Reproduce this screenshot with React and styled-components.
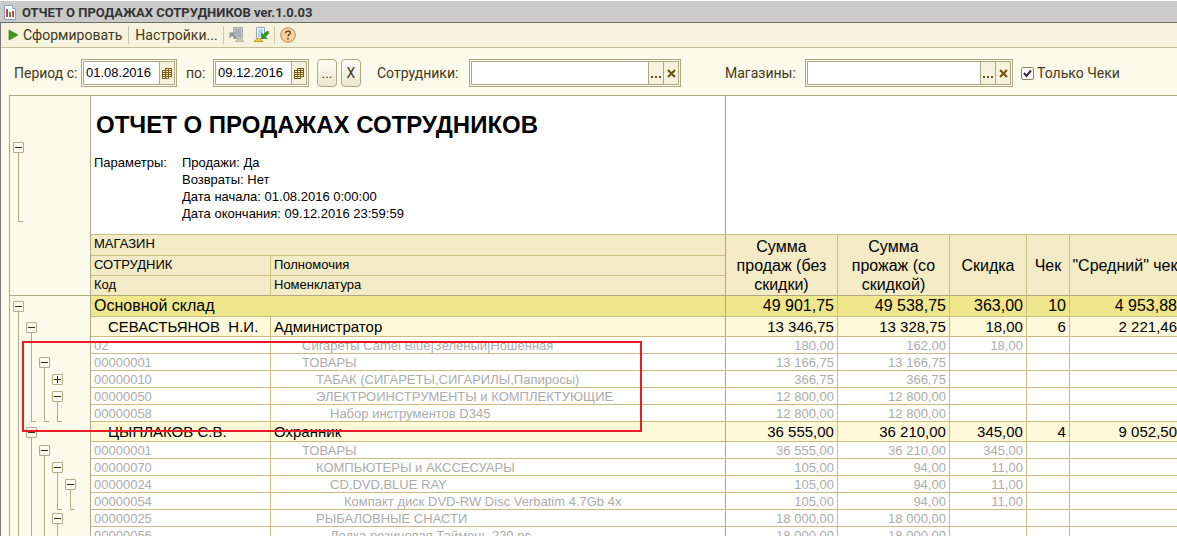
import React from "react";
import styled, { createGlobalStyle, css } from "styled-components";

const C = {
  line: "#c9be80",
  frame: "#b0a882",
  tree: "#b3ac88",
  bg: "#fcfaeb",
  bar: "#f5f2dd",
  head: "#f3ebc6",
  ink: "#42381a",
};

const Global = createGlobalStyle`
  * { box-sizing: border-box; }
  body { margin: 0; font-family: "Liberation Sans", Arial, sans-serif; background: ${C.bg}; overflow: hidden; }
  button, input { font-family: inherit; }
`;

const Window = styled.main`
  display: flex;
  flex-direction: column;
  height: 100vh;
  background: ${C.bg};
`;

const TitleBar = styled.header`
  display: flex;
  align-items: center;
  gap: 5px;
  height: 23px;
  flex: none;
  padding: 2px 3px 0;
  border-top: 1px solid #fff;
  border-bottom: 1px solid #6e6e6e;
  background: #cacaca;
`;

const WindowTitle = styled.h1`
  margin: 0;
  font-family: Roboto, sans-serif;
  font-size: 13px;
  font-weight: 700;
  line-height: 18px;
  color: #333;
  white-space: nowrap;
`;

const Body = styled.div`
  display: flex;
  flex-direction: column;
  flex: 1;
  min-height: 0;
  border-left: 1px solid #777;
`;

const Toolbar = styled.nav`
  display: flex;
  align-items: center;
  height: 25px;
  flex: none;
  padding-left: 7px;
  background: ${C.bar};
  border-bottom: 1px solid #c4bd98;
`;

const ToolButton = styled.button`
  display: flex;
  align-items: center;
  gap: 4px;
  height: 22px;
  margin: 0 0 0 ${(p) => p.$before ?? 0}px;
  padding: 0;
  border: 0;
  background: none;
  font-family: Roboto, sans-serif;
  font-size: 14px;
  color: ${C.ink};
  white-space: nowrap;
`;

const Divider = styled.span`
  width: 1px;
  height: 18px;
  margin: 0 ${(p) => p.$gap}px;
  background: #cdc7a5;
`;

const Filters = styled.form`
  display: flex;
  align-items: center;
  height: 47px;
  flex: none;
  padding: 3px 0 0 13px;
  font-family: Roboto, sans-serif;
  font-size: 14px;
  color: ${C.ink};
  white-space: nowrap;
`;

const FieldLabel = styled.label`
  width: ${(p) => p.$w}px;
  flex: none;
`;

const Field = styled.div`
  display: flex;
  width: ${(p) => p.$w}px;
  height: 28px;
  flex: none;
  margin-right: ${(p) => p.$after}px;
  padding: 1px;
  border: 1px solid ${C.frame};
  background: ${C.bg};
`;

const FieldInner = styled.div`
  display: flex;
  flex: 1;
  min-width: 0;
  border: 1px solid ${C.frame};
`;

const TextInput = styled.input`
  flex: 1;
  width: 0;
  min-width: 0;
  padding: 0 2px 2px;
  border: 0;
  outline: 0;
  background: #fff;
  font-family: "Liberation Sans", Arial, sans-serif;
  font-size: 13px;
  color: #000;
`;

const FieldButton = styled.button`
  display: flex;
  align-items: center;
  justify-content: center;
  width: 15px;
  flex: none;
  padding: 0;
  border: 0;
  border-left: 1px solid ${C.frame};
  background: ${C.bar};
`;

const PushButton = styled.button`
  width: 20px;
  height: 28px;
  flex: none;
  margin-right: ${(p) => p.$after}px;
  padding: 0;
  border: 1px solid ${C.frame};
  border-radius: 4px;
  background: linear-gradient(#fffef6, #ece7cd);
  font-family: Roboto, sans-serif;
  font-size: 14px;
  color: ${C.ink};
`;

const CheckLabel = styled.label`
  display: flex;
  align-items: center;
  gap: 3px;
`;

const CheckBox = styled.input`
  appearance: none;
  width: 13px;
  height: 13px;
  margin: 0;
  border: 1px solid #8f8763;
  border-radius: 2px;
  background: #fff
    url("data:image/svg+xml,%3Csvg xmlns='http://www.w3.org/2000/svg' viewBox='0 0 11 11'%3E%3Cpath d='M2 5l2.5 3L9 2.5' fill='none' stroke='%23333' stroke-width='2'/%3E%3C/svg%3E");
`;

const Report = styled.section`
  position: relative;
  flex: 1;
  min-height: 0;
  margin-left: 8px;
  overflow: hidden;
  border-left: 1px solid ${C.frame};
  border-top: 1px solid ${C.frame};
`;

const Sheet = styled.table`
  width: 100%;
  min-width: 1171px;
  table-layout: fixed;
  border-collapse: separate;
  border-spacing: 0;
  color: #000;
`;

const Col = styled.col`
  width: ${(p) => (p.$w ? `${p.$w}px` : "auto")};
`;

const TreeCell = styled.td`
  padding: 0 0 0 2px;
  border-right: 1px solid ${C.frame};
  ${(p) => p.$ruled && css`border-bottom: 1px solid ${C.frame};`}
  background: ${C.bg};
  vertical-align: top;
`;

const Slots = styled.div`
  display: flex;
  height: ${(p) => p.$h}px;
`;

const Slot = styled.span`
  display: flex;
  flex-direction: column;
  align-items: center;
  width: 13px;
  height: 100%;
  padding-top: ${(p) => p.$top ?? 0}px;
  padding-bottom: ${(p) => p.$bottom ?? 0}px;
`;

const Stem = styled.span`
  width: 5px;
  flex: 1;
  margin-left: 4px;
  border-left: 1px solid ${C.tree};
  ${(p) => p.$end && css`border-bottom: 1px solid ${C.tree};`}
`;

const Gap = styled.span`
  flex: 1;
`;

const Toggle = styled.button`
  position: relative;
  width: 11px;
  height: 11px;
  flex: none;
  padding: 0;
  border: 1px solid ${C.tree};
  border-radius: 1px;
  background: #fffef6;
  &::before {
    content: "";
    position: absolute;
    left: 1px;
    top: 4px;
    width: 7px;
    height: 1px;
    background: #3c3000;
  }
  ${(p) => p.$closed && css`
    &::after {
      content: "";
      position: absolute;
      left: 4px;
      top: 1px;
      width: 1px;
      height: 7px;
      background: #3c3000;
    }
  `}
`;

const rowLook = {
  store: css`background: #f0e68c; font-size: 16px; color: #000; line-height: 20px;`,
  person: css`background: #fff9da; font-size: 15px; color: #000; line-height: 19px;`,
  item: css`padding-top: 1px; background: #fff; font-size: 13px; color: #acacac; line-height: 15px;`,
};

const Cell = styled.td`
  padding: 0 3px 0 ${(p) => 3 + (p.$indent ?? 0) * 14}px;
  border-right: 1px solid ${(p) => (p.$split ? C.frame : C.line)};
  border-bottom: 1px solid ${C.line};
  text-align: ${(p) => (p.$num ? "right" : "left")};
  white-space: pre;
  overflow: hidden;
  ${(p) => rowLook[p.$kind]}
`;

const HeadCell = styled.th`
  height: ${(p) => p.$h}px;
  padding: 0 3px 2px;
  border-right: 1px solid ${(p) => (p.$split ? C.frame : C.line)};
  border-bottom: 1px solid ${(p) => (p.$last ? C.frame : C.line)};
  background: ${C.head};
  font-size: 13px;
  font-weight: 400;
  line-height: 16px;
  text-align: left;
  ${(p) => p.$big && css`
    padding: 1px 0 0;
    font-size: 16px;
    line-height: 19px;
    text-align: center;
    white-space: pre-line;
  `}
`;

const Cover = styled.td`
  height: 139px;
  padding: 14px 3px 0;
  border-bottom: 1px solid ${C.line};
  ${(p) => p.$split && css`border-right: 1px solid ${C.frame};`}
  background: #fff;
  vertical-align: top;
`;

const ReportTitle = styled.h2`
  margin: 0 0 15px;
  padding-left: 2px;
  font-size: 24px;
  line-height: 29px;
`;

const Params = styled.dl`
  display: grid;
  grid-template-columns: 88px 1fr;
  margin: 0;
  font-size: 13px;
  line-height: 17px;
`;

const Param = styled.dd`
  grid-column: 2;
  margin: 0;
`;

const Highlight = styled.div`
  position: absolute;
  left: 12px;
  top: 245px;
  width: 620px;
  height: 91px;
  border: 2px solid #ed1c24;
  pointer-events: none;
`;

const ReportIcon = () => (
  <svg width="14" height="15" viewBox="0 0 14 15">
    <path d="M1.5.5h8l3 3v11h-11z" fill="#fff" stroke="#8fa3ba" />
    <path d="M9.500.5v3h3" fill="#dbe6f2" stroke="#8fa3ba" />
    <path d="M3 4h2v8H3z" fill="#d63a3a" />
    <path d="M6 7h2v5H6z" fill="#3a9a3a" />
    <path d="M9 6h2v6H9z" fill="#d63a3a" />
  </svg>
);

const PlayIcon = () => (
  <svg width="11" height="12" viewBox="0 0 11 12">
    <path d="M1 1l9 5-9 5z" fill="#3a9a22" stroke="#2a7a1a" strokeWidth=".6" />
  </svg>
);

const RestoreIcon = () => (
  <svg width="16" height="16" viewBox="0 0 16 16">
    <path d="M4.500.5h9v11h-9z" fill="#c3c8cc" stroke="#a6abb0" />
    <path d="M6 3h6M6 5h6M6 7h6M8 9h4" stroke="#8f969b" />
    <path d="M6 14.500l4.500-4 4.500 4z" fill="#cfc9b4" stroke="#b3ac94" strokeWidth=".7" />
    <path d="M.5 5.500h6L4.800 7.200l3 3-1.600 1.600-3-3L.5 11.500z" fill="#8b979c" />
  </svg>
);

const SaveIcon = () => (
  <svg width="16" height="16" viewBox="0 0 16 16">
    <path d="M3.500.5h8v11h-8z" fill="#fff" stroke="#8fa6c0" />
    <path d="M5 3h5M5 5h5M5 7h4M5 9h3" stroke="#7fa3cc" />
    <path d="M1 14.500l4.500-4 4.500 4z" fill="#f3cc3a" stroke="#b88a10" strokeWidth=".8" />
    <path d="M15.500 4.500v2.200l-3 3 1.700 1.800H8.500V6l1.800 1.600 3-3z" fill="#2f9a24" stroke="#1d7315" strokeWidth=".5" />
  </svg>
);

const HelpIcon = () => (
  <svg width="16" height="16" viewBox="0 0 16 16">
    <circle cx="8" cy="8" r="7.300" fill="#f9cf9a" stroke="#b98a62" />
    <path d="M5.700 6.200C5.700 3.400 10.500 3.400 10.300 6 10.200 7.600 8 7.600 8 9.600M8 11v1.500" fill="none" stroke="#5a3a1a" strokeWidth="1.400" />
  </svg>
);

const CalendarIcon = () => (
  <svg width="11" height="11" viewBox="0 0 11 11" shapeRendering="crispEdges">
    <path d="M3.500 0v9M6.500 0v11M9.500 0v9M.5 2v9M3.500 2v9M3 .5h7M0 2.500h10M0 4.500h10M0 6.500h10M0 8.500h10M0 10.500h7" fill="none" stroke="#7a5c10" />
  </svg>
);

const DotsIcon = () => (
  <svg width="12" height="12" viewBox="0 0 12 12">
    <path d="M1 9h2v2H1zM5 9h2v2H5zM9 9h2v2H9z" fill="#6b5210" />
  </svg>
);

const CrossIcon = () => (
  <svg width="9" height="9" viewBox="0 0 9 9">
    <path d="M1 1l7 7M8 1l-7 7" stroke="#6b5210" strokeWidth="2" />
  </svg>
);

/* Tree marks, one letter per level: b open node, p closed node, l line, e line end */
const rows = [
  { k: "store", t: "b", name: "Основной склад", v: ["49 901,75", "49 538,75", "363,00", "10", "4 953,88"] },
  { k: "person", t: "lb", code: "СЕВАСТЬЯНОВ  Н.И.", name: "Администратор", v: ["13 346,75", "13 328,75", "18,00", "6", "2 221,46"] },
  { k: "item", t: "ll", code: "02", name: "Сигареты Camel Blue|Зеленый|Ношенная", i: 2, v: ["180,00", "162,00", "18,00"] },
  { k: "item", t: "llb", code: "00000001", name: "ТОВАРЫ", i: 2, v: ["13 166,75", "13 166,75"] },
  { k: "item", t: "lllp", code: "00000010", name: "ТАБАК (СИГАРЕТЫ,СИГАРИЛЫ,Папиросы)", i: 3, v: ["366,75", "366,75"] },
  { k: "item", t: "lllb", code: "00000050", name: "ЭЛЕКТРОИНСТРУМЕНТЫ и КОМПЛЕКТУЮЩИЕ", i: 3, v: ["12 800,00", "12 800,00"] },
  { k: "item", t: "leee", code: "00000058", name: "Набор инструментов D345", i: 4, v: ["12 800,00", "12 800,00"] },
  { k: "person", t: "lb", code: "ЦЫПЛАКОВ С.В.", name: "Охранник", v: ["36 555,00", "36 210,00", "345,00", "4", "9 052,50"] },
  { k: "item", t: "llb", code: "00000001", name: "ТОВАРЫ", i: 2, v: ["36 555,00", "36 210,00", "345,00"] },
  { k: "item", t: "lllb", code: "00000070", name: "КОМПЬЮТЕРЫ и АКССЕСУАРЫ", i: 3, v: ["105,00", "94,00", "11,00"] },
  { k: "item", t: "llllb", code: "00000024", name: "CD,DVD,BLUE RAY", i: 4, v: ["105,00", "94,00", "11,00"] },
  { k: "item", t: "lllee", code: "00000054", name: "Компакт диск DVD-RW Disc Verbatim 4.7Gb 4x", i: 5, v: ["105,00", "94,00", "11,00"] },
  { k: "item", t: "lllb", code: "00000025", name: "РЫБАЛОВНЫЕ СНАСТИ", i: 3, v: ["18 000,00", "18 000,00"] },
  { k: "item", t: "llll", code: "00000056", name: "Лодка резиновая Таймень 220 рс", i: 4, v: ["18 000,00", "18 000,00"] },
];

const rowHeight = { store: 21, person: 20, item: 17 };
const heads = ["Сумма\nпродаж (без\nскидки)", "Сумма\nпрожаж (со\nскидкой)", "Скидка", "Чек", '"Средний" чек'];

function Tree({ marks, height }) {
  return (
    <Slots $h={height}>
      {[...marks].map((m, n) => {
        if (m === "l" || m === "e") return <Slot key={n}><Stem $end={m === "e"} /></Slot>;
        return (
          <Slot key={n} $top={height > 17 ? 5 : 3}>
            <Toggle type="button" $closed={m === "p"} aria-label={m === "p" ? "Развернуть" : "Свернуть"} />
            {m === "p" ? <Gap /> : <Stem />}
          </Slot>
        );
      })}
    </Slots>
  );
}

function DateField({ id, value, w, after }) {
  return (
    <Field $w={w} $after={after}>
      <FieldInner>
        <TextInput id={id} defaultValue={value} />
        <FieldButton type="button" aria-label="Календарь"><CalendarIcon /></FieldButton>
      </FieldInner>
    </Field>
  );
}

function PickField({ id, w, after }) {
  return (
    <Field $w={w} $after={after}>
      <FieldInner>
        <TextInput id={id} />
        <FieldButton type="button" aria-label="Выбрать"><DotsIcon /></FieldButton>
        <FieldButton type="button" aria-label="Очистить"><CrossIcon /></FieldButton>
      </FieldInner>
    </Field>
  );
}

export default function App() {
  return (
    <Window>
      <Global />
      <TitleBar>
        <ReportIcon />
        <WindowTitle>ОТЧЕТ О ПРОДАЖАХ СОТРУДНИКОВ ver.1.0.03</WindowTitle>
      </TitleBar>
      <Body>
        <Toolbar>
          <ToolButton><PlayIcon />Сформировать</ToolButton>
          <Divider $gap={6} />
          <ToolButton>Настройки...</ToolButton>
          <Divider $gap={5} />
          <ToolButton aria-label="Восстановить"><RestoreIcon /></ToolButton>
          <ToolButton $before={8} aria-label="Сохранить"><SaveIcon /></ToolButton>
          <Divider $gap={5} />
          <ToolButton aria-label="Справка"><HelpIcon /></ToolButton>
        </Toolbar>
        <Filters>
          <FieldLabel htmlFor="from" $w={67}>Период с:</FieldLabel>
          <DateField id="from" value="01.08.2016" w={96} after={9} />
          <FieldLabel htmlFor="to" $w={27}>по:</FieldLabel>
          <DateField id="to" value="09.12.2016" w={96} after={8} />
          <PushButton type="button" $after={4}>...</PushButton>
          <PushButton type="button" $after={16}>X</PushButton>
          <FieldLabel htmlFor="staff" $w={92}>Сотрудники:</FieldLabel>
          <PickField id="staff" w={212} after={44} />
          <FieldLabel htmlFor="shops" $w={80}>Магазины:</FieldLabel>
          <PickField id="shops" w={208} after={8} />
          <CheckLabel>
            <CheckBox type="checkbox" defaultChecked />
            Только Чеки
          </CheckLabel>
        </Filters>
        <Report>
          <Sheet>
            <colgroup>
              <Col $w={81} /><Col $w={180} /><Col /><Col $w={112} /><Col $w={112} />
              <Col $w={77} /><Col $w={43} /><Col $w={111} />
            </colgroup>
            <thead>
              <tr>
                <TreeCell>
                  <Slots $h={139}>
                    <Slot $top={46} $bottom={13}>
                      <Toggle type="button" aria-label="Свернуть" />
                      <Stem $end />
                    </Slot>
                  </Slots>
                </TreeCell>
                <Cover colSpan={2} $split>
                  <ReportTitle>ОТЧЕТ О ПРОДАЖАХ СОТРУДНИКОВ</ReportTitle>
                  <Params>
                    <dt>Параметры:</dt>
                    <Param>Продажи: Да</Param>
                    <Param>Возвраты: Нет</Param>
                    <Param>Дата начала: 01.08.2016 0:00:00</Param>
                    <Param>Дата окончания: 09.12.2016 23:59:59</Param>
                  </Params>
                </Cover>
                <Cover colSpan={5} />
              </tr>
              <tr>
                <TreeCell rowSpan={3} $ruled />
                <HeadCell $h={21} colSpan={2} $split>МАГАЗИН</HeadCell>
                {heads.map((h) => <HeadCell key={h} rowSpan={3} $big $last>{h}</HeadCell>)}
              </tr>
              <tr>
                <HeadCell $h={20}>СОТРУДНИК</HeadCell>
                <HeadCell $split>Полномочия</HeadCell>
              </tr>
              <tr>
                <HeadCell $h={20} $last>Код</HeadCell>
                <HeadCell $split $last>Номенклатура</HeadCell>
              </tr>
            </thead>
            <tbody>
              {rows.map((r, n) => (
                <tr key={n}>
                  <TreeCell><Tree marks={r.t} height={rowHeight[r.k]} /></TreeCell>
                  {r.code && <Cell $kind={r.k} $indent={r.k === "person" ? 1 : 0}>{r.code}</Cell>}
                  <Cell $kind={r.k} $split colSpan={r.code ? 1 : 2} $indent={r.i}>{r.name}</Cell>
                  {[0, 1, 2, 3, 4].map((c) => <Cell key={c} $kind={r.k} $num>{r.v[c]}</Cell>)}
                </tr>
              ))}
            </tbody>
          </Sheet>
          <Highlight />
        </Report>
      </Body>
    </Window>
  );
}
